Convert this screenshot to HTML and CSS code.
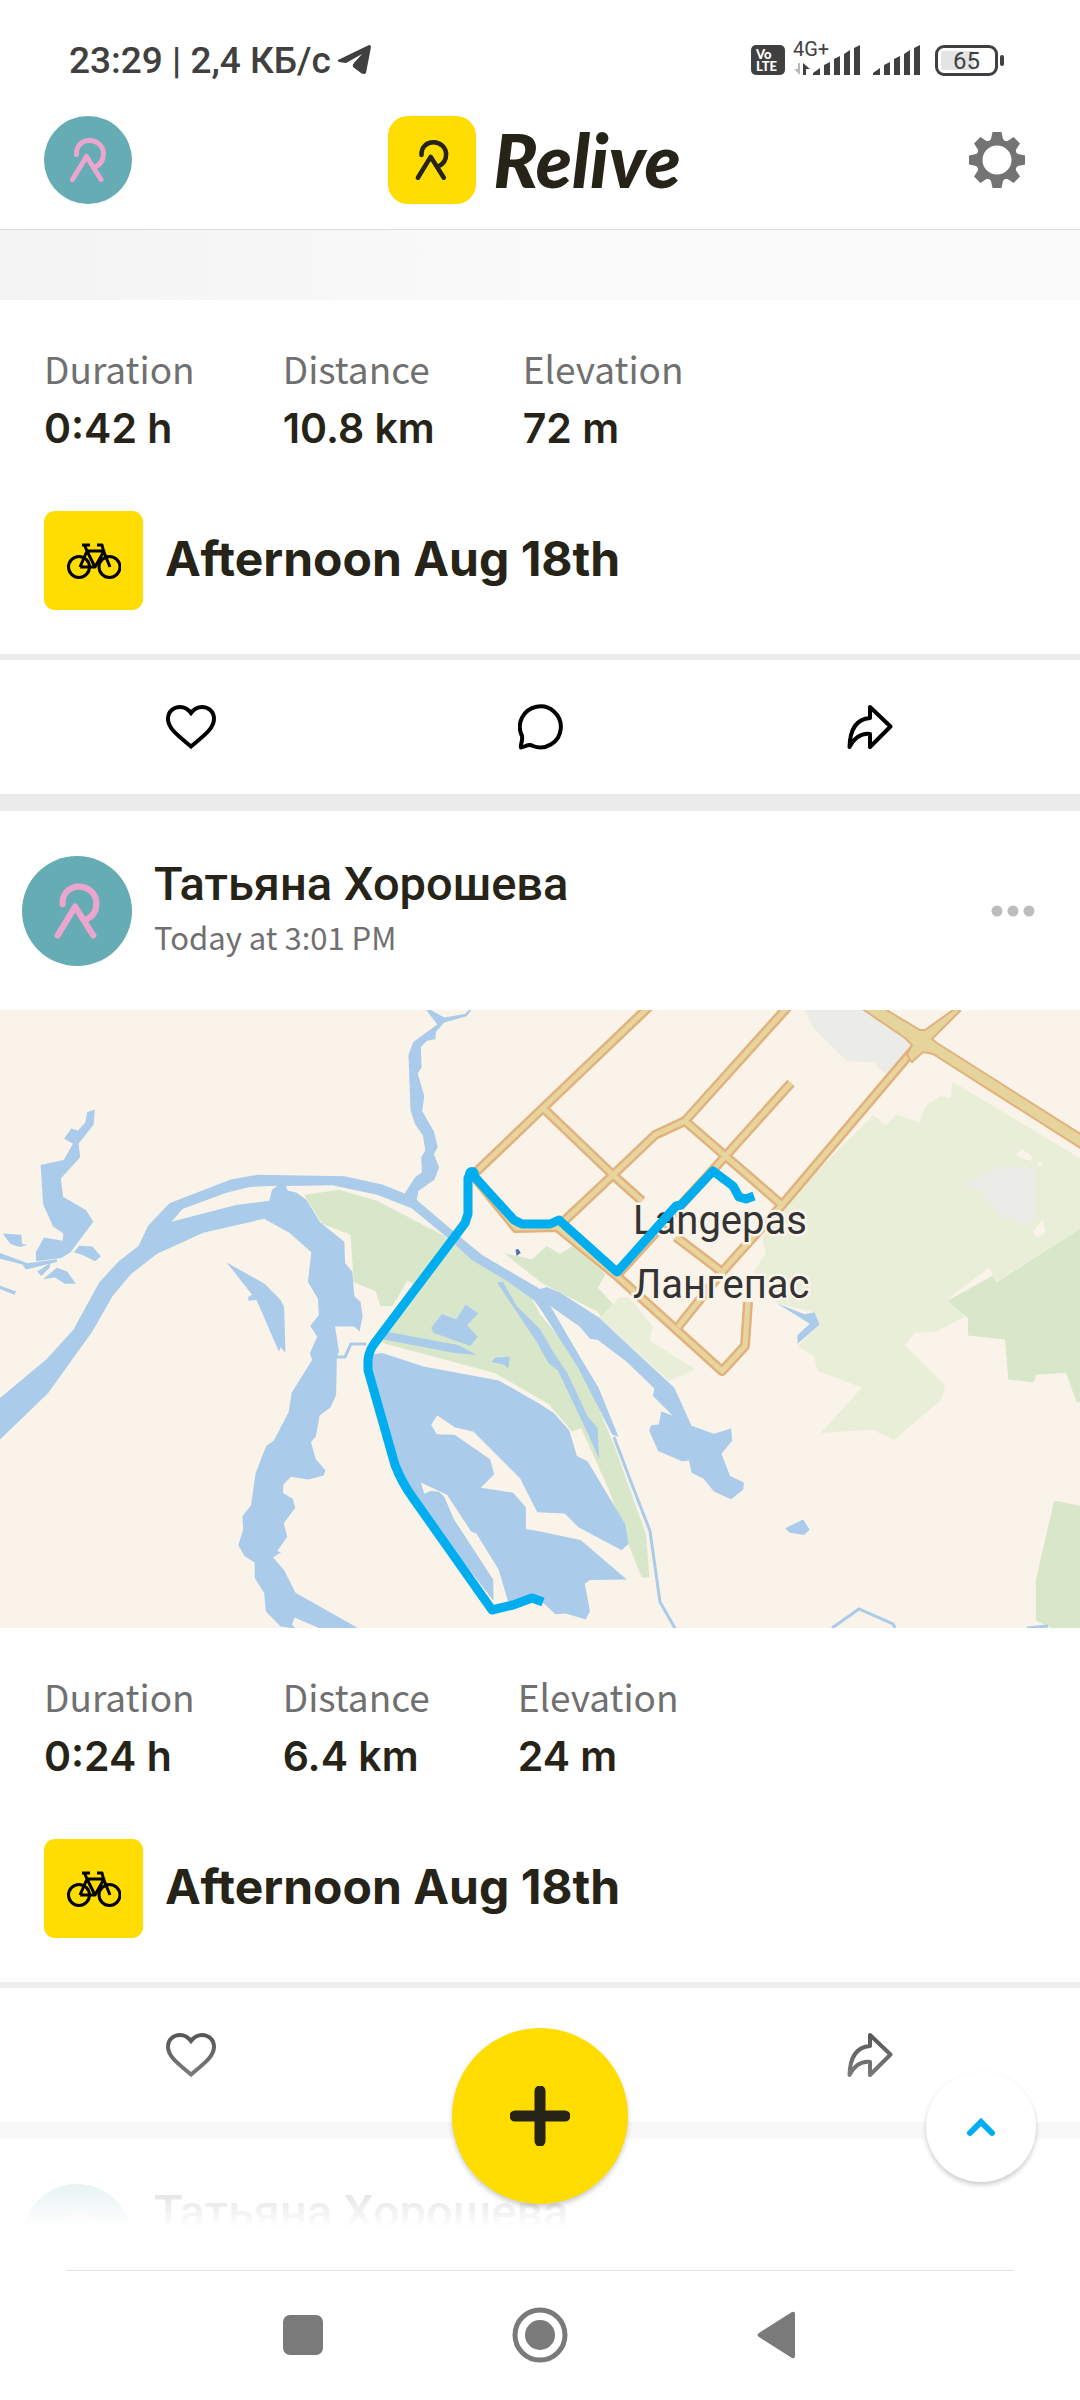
FILE: index.html
```
<!DOCTYPE html>
<html lang="en">
<head>
    <meta charset="utf-8">
    <meta name="viewport" content="width=device-width, initial-scale=1">
    <title>Relive</title>
    <link rel="stylesheet" href="styles.css">
</head>
<body>
<!-- shared icons -->
<svg class="defs" aria-hidden="true">
    <symbol id="mark" viewBox="0 0 88 88">
        <path d="M32.500 38.500C32 30 38 24.500 45.500 24.500C53 24.500 59.500 30 59.500 38C59.500 44 56.500 48.500 51 51M28.500 63.500L42.500 40.500L57 63.500" fill="none" stroke="currentColor" stroke-width="5" stroke-linecap="round" stroke-linejoin="round"/>
    </symbol>
    <symbol id="bike" viewBox="0 0 54 36">
        <g fill="none" stroke="#000" stroke-width="3" stroke-linejoin="round">
            <circle cx="12" cy="24" r="10.500"/>
            <circle cx="42.500" cy="24" r="10.500"/>
            <path d="M13 24H28L37 8H20L13 24M20 8L28 24M15 2H23M17.500 2L20 8M30 2H35L36.500 8L43 24"/>
        </g>
    </symbol>
    <symbol id="heart" viewBox="0 0 50 44">
        <path d="M25 41.500C14 32 2 24 2 14C2 6 8 2 14 2C19 2 22 4 25 8C28 4 31 2 36 2C42 2 48 6 48 14C48 24 36 32 25 41.500Z" fill="none" stroke="#000" stroke-width="4"/>
    </symbol>
    <symbol id="comment" viewBox="0 0 46 46">
        <path d="M4 32A20.500 20.500 0 1 1 15 42C10 39 8 43 3 43.500C2 41 5 37 4 32Z" fill="none" stroke="#000" stroke-width="4" stroke-linejoin="round"/>
    </symbol>
    <symbol id="share" viewBox="0 0 46 46">
        <path d="M2.500 43C3 25 9 15 23 14V3L43.500 22.500L23 43V30C15 29 8 33 2.500 43Z" fill="none" stroke="#000" stroke-width="4" stroke-linejoin="round"/>
    </symbol>
    <symbol id="bars" viewBox="0 0 48 30">
        <path d="M0 30V28L7 23V30ZM11 30V20L17 17V30ZM21 30V14L27 11V30ZM31 30V9L37 5V30ZM41 30V3L47 0V30Z" fill="#404040"/>
    </symbol>
</svg>

<div class="app">
    <div class="status">
        <span class="statusText">23:29 | 2,4 КБ/с</span>
        <svg class="telegram" width="34" height="30" viewBox="0 0 34 30"><path d="M1 15L32 0Q34 0 34 2L29 28Q27 30 24 28L16 22Q15 20 17 18L25 9L9 18L2 17Q0 16 1 15Z" fill="#404040"/></svg>
        <div class="statusIcons">
            <span class="volte"><span>Vo</span><span>LTE</span></span>
            <span class="network">
                <span class="networkType">4G+</span>
                <svg class="traffic" width="16" height="12" viewBox="0 0 16 12"><path d="M0 6H4V0H6V12Z" fill="#b8b8b8"/><path d="M9 12V0L16 6H12V12Z" fill="#404040"/></svg>
                <svg width="48" height="30"><use href="#bars"/></svg>
            </span>
            <svg width="48" height="30"><use href="#bars"/></svg>
            <span class="battery">65</span>
        </div>
    </div>

    <header class="header">
        <button class="avatar small" aria-label="Profile"><svg><use href="#mark"/></svg></button>
        <a class="logo" href="#">
            <span class="logoBox"><svg><use href="#mark"/></svg></span>
            <span class="logoText">Relive</span>
        </a>
        <button class="settings" aria-label="Settings">
            <svg width="56" height="56" viewBox="-28 -28 56 56" fill="#737373">
                <circle r="17.500" fill="none" stroke="#737373" stroke-width="6"/>
                <path id="tooth" d="M-4.500 -28H4.500L6 -21Q7 -19 10 -18L-10 -18Q-7 -19 -6 -21Z"/>
                <use href="#tooth" transform="rotate(45)"/>
                <use href="#tooth" transform="rotate(90)"/>
                <use href="#tooth" transform="rotate(135)"/>
                <use href="#tooth" transform="rotate(180)"/>
                <use href="#tooth" transform="rotate(225)"/>
                <use href="#tooth" transform="rotate(270)"/>
                <use href="#tooth" transform="rotate(315)"/>
            </svg>
        </button>
    </header>

    <main class="feed">
        <article class="post">
            <div class="loading"></div>
            <dl class="stats">
                <div><dt>Duration</dt><dd>0:42 h</dd></div>
                <div><dt>Distance</dt><dd>10.8 km</dd></div>
                <div><dt>Elevation</dt><dd>72 m</dd></div>
            </dl>
            <div class="title">
                <span class="sport"><svg width="54" height="36"><use href="#bike"/></svg></span>
                <h2>Afternoon Aug 18th</h2>
            </div>
            <div class="actions">
                <button aria-label="Like"><svg width="50" height="44"><use href="#heart"/></svg></button>
                <button aria-label="Comment"><svg width="46" height="46"><use href="#comment"/></svg></button>
                <button aria-label="Share"><svg width="46" height="46"><use href="#share"/></svg></button>
            </div>
        </article>

        <article class="post">
            <div class="author">
                <span class="avatar"><svg><use href="#mark"/></svg></span>
                <div class="authorText">
                    <a href="#" class="name">Татьяна Хорошева</a>
                    <span class="time">Today at 3:01 PM</span>
                </div>
                <button class="more" aria-label="More">
                    <svg width="44" height="12" viewBox="0 0 44 12" fill="#bdbdbd"><circle cx="6" cy="6" r="5.500"/><circle cx="22" cy="6" r="5.500"/><circle cx="38" cy="6" r="5.500"/></svg>
                </button>
            </div>
            <svg class="map" viewBox="0 0 1080 618">
                <rect width="1080" height="618" fill="#faf3e9"/>
                <g transform="translate(0 -10) scale(.34439 .40816)">
                    <!-- built up areas -->
                    <path class="grey" d="M2338 24H2513L2648 105L2638 140L2580 188L2538 153L2460 150L2358 65Z"/>
                    <!-- woods -->
                    <path class="meadow" d="M2766 200L3136 388V560L2893 690L2873 655L2768 722L2753 737L2803 776L2718 812L2656 815L2628 846L2745 945L2733 980L2596 1078L2533 1053L2383 1061L2503 950L2373 908L2365 875L2318 848L2380 795L2365 765L2258 743L2188 668L2223 620L2213 585L2271 505L2536 282L2571 307L2603 280L2668 300L2688 260L2728 235L2760 240Z"/>
                    <path class="meadow" d="M1780 745L1798 728L1828 730L1896 800L1886 835L2020 905L1943 933L1738 777Z"/>
                    <path class="wood" d="M3140 558L2893 692L2883 675L2751 737L2811 780V822L2918 832L2928 930L3001 937L3008 918L3095 913L3126 985L3140 987Z"/>
                    <path class="wood" d="M3061 1226L3140 1240V1540H3058L3008 1520V1420Z"/>
                    <path class="wood" d="M883 478L985 465L1095 492L1290 578L1400 650L1540 725L1568 770L1643 845L1718 960L1783 1090L1876 1310L1886 1415H1863L1826 1335L1768 1200L1688 1050L1661 1057L1593 990L1440 915L1110 840V825L1205 697L1183 688L1140 750H1105L1090 713L1027 692L1018 575L935 548Z"/>
                    <path class="wood" d="M1463 620L1545 635L1588 603L1626 622L1663 602L1758 672L1736 705L1780 745L1745 775L1733 762L1628 718L1568 690Z"/>
                    <path class="grey" d="M2798 453L2903 407L3008 412V530L2983 553L2933 530L2908 540L2853 470Z"/>
                    <path class="land" d="M2948 380L2968 365L3000 385L2993 395ZM2998 570L3028 538L3036 568L3013 583ZM3008 395L3028 400L3020 410Z"/>
                    <!-- rivers -->
                    <path class="water" d="M0 975L135 880L213 808L288 692L345 640L403 602L430 553L492 498L670 440L750 428L1000 432L1110 452L1175 474L1205 435L1225 422L1223 385L1235 368L1228 332L1205 303L1192 270L1186 135L1200 103L1270 60L1237 24H1250L1290 43L1350 34L1362 24H1370L1355 40L1290 55L1266 78L1264 96L1240 100L1222 115L1224 165L1213 180L1232 236L1226 272L1260 322L1271 360L1260 378L1275 410L1262 440L1215 468L1210 490L1345 587L1400 625L1568 708L1588 703L1628 718L1738 777L1958 950L2008 1043L2073 1063L2123 1050L2126 1080L2095 1112L2120 1166L2160 1182L2158 1200L2123 1223L2073 1204L2043 1173L2008 1158L2001 1128L1980 1130L1911 1105L1885 1055L1891 1042L1913 1040L1920 1008L1953 1018L1896 970L1900 952L1818 885L1736 833L1713 830L1683 800L1598 750L1688 880L1738 950L1796 1070L1778 1065L1678 900L1568 755L1550 735L1475 690L1370 637L1310 590L1195 510L1095 477L965 454L830 456L835 467L862 472L890 490L930 545L1000 592L1002 645L1023 665L1029 725L1047 740L1053 775L1044 812L1028 800H973L984 860L978 880L976 968L960 998L928 1018L917 1070L903 1083L917 1125L945 1152L940 1165L895 1175L845 1168L823 1187L822 1208L850 1222L857 1244L824 1282L834 1315L805 1350L816 1353L793 1366L825 1397L858 1452L1042 1540H930L855 1513L848 1530L858 1540L815 1535L772 1498L767 1453L740 1417L739 1378L710 1362L692 1336L706 1298L704 1265L729 1238L742 1160L773 1093L795 1080L838 1010L847 962L906 882L900 865L921 825L901 798L926 772L923 732L894 690L904 618L840 570L767 536L590 570L455 622L380 672L327 725L268 812L140 963L0 1077Z"/>
                    <path class="land" d="M498 543L530 512L655 473L725 458L805 455L790 465L782 492L685 502Z"/>
                    <path class="water" d="M275 268L272 305L228 352L233 385L177 437L183 482L250 515L271 543L205 618L178 632L105 640L104 618L128 582L182 590L184 572L154 555L125 500L118 404L185 392L212 352L186 340L207 315L226 320L248 300L253 275Z"/>
                    <path class="water" d="M8 572L62 575L64 598L80 600L58 605L30 598ZM214 618L230 602L268 604L293 628L276 640L240 625ZM125 684L165 656L195 665L220 695H188L160 680ZM0 620L80 645L165 635V642L75 660L65 648L0 634ZM0 700L47 714L42 722L0 708ZM108 665L145 645V655L120 676Z"/>
                    <path class="water" d="M658 643L768 695L815 735L825 752L829 865L815 850L810 862L745 735L722 737L720 728L732 722Z"/>
                    <!-- lakes -->
                    <path class="water" d="M1252 803L1283 769L1325 783L1352 746L1389 768L1356 797L1387 825L1366 848L1258 815ZM1120 812L1330 845L1385 870L1320 865L1115 832ZM1427 887L1438 876L1480 874L1476 902L1462 893ZM1443 692L1460 690L1500 750L1568 806L1608 865L1648 915L1706 1020L1735 1048L1740 1125L1706 1060L1620 908L1593 890L1560 840Z"/>
                    <path class="water" d="M1085 868L1110 865L1230 898L1448 932L1568 990L1608 1012L1653 1055L1675 1117L1706 1130L1816 1285L1825 1333L1805 1348L1680 1292L1640 1258L1560 1255L1510 1172L1375 1058L1320 1047L1270 1018L1252 1040L1268 1064L1320 1065L1423 1125L1435 1162L1396 1195L1490 1207L1527 1243V1296L1568 1302L1686 1323L1820 1420L1713 1421L1698 1430L1713 1497L1701 1518L1643 1503L1613 1505L1568 1470L1475 1473L1448 1395L1383 1307L1368 1302L1298 1212L1222 1182L1232 1210L1250 1203L1275 1205L1290 1217L1318 1272L1432 1420L1433 1472L1200 1220L1150 1130L1075 900Z"/>
                    <path class="water" d="M2256 743L2336 770L2365 765L2380 795L2316 842L2315 822L2351 793ZM2280 1294L2332 1273L2351 1298L2335 1311L2293 1305Z"/>
                    <path d="M1497 612L1505 610L1512 620L1500 627Z" fill="#4c72b5"/>
                </g>
                <path class="stream" d="M614 427L631 472L650 521L660 592L676 620M832 618L859 599L893 614L895 618M1027 618L1048 616M335 347H345L351 334H366"/>

                <g class="roads casing">
                    <path d="M656 -10L543 98L473 165L516 218L557 217L617 266L722 361L745 336L748 292"/>
                    <path d="M543 98L613 165L642 191M676 227L722 262M794 -10L685 111L655 125L613 165L562 213M685 111L782 195M791 73L713 160L617 265M920 32L782 195L722 262L678 317"/>
                </g>
                <g class="roads fill">
                    <path d="M656 -10L543 98L473 165L516 218L557 217L617 266L722 361L745 336L748 292"/>
                    <path d="M543 98L613 165L642 191M676 227L722 262M794 -10L685 111L655 125L613 165L562 213M685 111L782 195M791 73L713 160L617 265M920 32L782 195L722 262L678 317"/>
                </g>
                <path d="M861 -2H883L920 20L925 20L956 -2L960 1L932 29L937 33L1082 125V139L933 44L923 42L912 52L907 45L912 35L905 28Z" fill="#e5d49b" stroke="#e2b27e" stroke-width="2"/>

                <text class="place" x="633" y="224">Langepas</text>
                <text class="place" x="633" y="288">Лангепас</text>
                <path class="route" d="M754 186L746 189L739 187L733 176L713 161L681 195L676 196L617 262L559 210L550 214H522L514 210L472 164L468 168V204L465 213L374 334Q369 341 368 350V360L395 455Q402 473 413 488L492 600L513 595L532 588L543 592"/>
                <circle cx="472" cy="164" r="7" fill="#00aeef"/>
            </svg>
            <dl class="stats">
                <div><dt>Duration</dt><dd>0:24 h</dd></div>
                <div><dt>Distance</dt><dd>6.4 km</dd></div>
                <div><dt>Elevation</dt><dd>24 m</dd></div>
            </dl>
            <div class="title">
                <span class="sport"><svg width="54" height="36"><use href="#bike"/></svg></span>
                <h2>Afternoon Aug 18th</h2>
            </div>
            <div class="actions">
                <button aria-label="Like"><svg width="50" height="44"><use href="#heart"/></svg></button>
                <button aria-label="Comment"><svg width="46" height="46"><use href="#comment"/></svg></button>
                <button aria-label="Share"><svg width="46" height="46"><use href="#share"/></svg></button>
            </div>
        </article>

        <article class="post">
            <div class="author">
                <span class="avatar"><svg><use href="#mark"/></svg></span>
                <div class="authorText">
                    <a href="#" class="name">Татьяна Хорошева</a>
                </div>
            </div>
        </article>

        <div class="fade"></div>
        <button class="add" aria-label="Add activity">
            <svg width="60" height="60" viewBox="0 0 60 60"><path d="M30 5V55M5 30H55" stroke="#262318" stroke-width="11" stroke-linecap="round"/></svg>
        </button>
        <button class="toTop" aria-label="Back to top">
            <svg width="30" height="20" viewBox="0 0 30 20"><path d="M4 16L15 5L26 16" fill="none" stroke="#00aeef" stroke-width="6" stroke-linecap="round"/></svg>
        </button>
    </main>

    <nav class="navbar">
        <button aria-label="Recent apps"><svg width="56" height="56" viewBox="0 0 56 56"><rect x="8" y="8" width="40" height="40" rx="7" fill="#7a7a7a"/></svg></button>
        <button aria-label="Home"><svg width="56" height="56" viewBox="0 0 56 56"><circle cx="28" cy="28" r="25" fill="none" stroke="#7a7a7a" stroke-width="5"/><circle cx="28" cy="28" r="15" fill="#7a7a7a"/></svg></button>
        <button aria-label="Back"><svg width="56" height="56" viewBox="0 0 56 56"><path d="M10 26L43 5Q46 4 46 7V49Q46 52 43 51L10 30Q7 28 10 26Z" fill="#7a7a7a"/></svg></button>
    </nav>
</div>
</body>
</html>
```
FILE: styles.css
```
* {
    box-sizing: border-box;
}
body {
    margin: 0;
    background-color: white;
    color: #262318;
    font-family: "Noto Sans CJK SC", "Noto Sans", sans-serif;
}
button {
    padding: 0;
    border: none;
    background: none;
    color: inherit;
}
a {
    color: inherit;
    text-decoration: none;
}
svg {
    display: block;
}
.defs {
    position: absolute;
    width: 0;
    height: 0;
}
.app {
    display: flex;
    flex-direction: column;
    height: 100vh;
}

/* status bar */
.status {
    display: flex;
    align-items: center;
    flex: none;
    height: 104px;
    padding: 16px 82px 0 69px;
    color: #404040;
    font-family: Roboto, sans-serif;
}
.statusText {
    font-size: 37px;
    font-weight: 500;
}
.telegram {
    margin-left: 6px;
}
.statusIcons {
    display: flex;
    align-items: center;
    gap: 12px;
    margin-left: auto;
}
.volte {
    display: flex;
    flex-direction: column;
    align-items: flex-start;
    width: 34px;
    height: 30px;
    padding: 3px 5px;
    border-radius: 5px;
    background-color: #404040;
    color: white;
    font-family: Lato, sans-serif;
    font-size: 13px;
    font-weight: 900;
    line-height: 12px;
}
.network {
    position: relative;
    padding-left: 16px;
}
.networkType {
    position: absolute;
    left: -4px;
    top: -8px;
    font-size: 20px;
    line-height: 24px;
}
.traffic {
    position: absolute;
    left: -3px;
    bottom: 0;
}
.battery {
    position: relative;
    width: 63px;
    height: 31px;
    margin-left: 2px;
    border: 3px solid #404040;
    border-radius: 9px;
    background: linear-gradient(to right, #e4e4e4 65%, white 65%) content-box;
    padding: 3px;
    font-size: 24px;
    line-height: 20px;
    text-align: center;
}
.battery::after {
    content: "";
    position: absolute;
    right: -9px;
    top: 7px;
    width: 4px;
    height: 11px;
    border-radius: 2px;
    background-color: #404040;
}

/* app header */
.header {
    display: grid;
    grid-template-columns: 1fr auto 1fr;
    align-items: center;
    flex: none;
    padding: 12px 55px 25px 44px;
    border-bottom: 1px solid #dedede;
}
.avatar {
    flex: none;
    width: 110px;
    height: 110px;
    border-radius: 50%;
    background-color: #66acb4;
    color: #eba6cf;
}
.avatar.small {
    width: 88px;
    height: 88px;
}
.avatar svg, .logoBox svg {
    width: 100%;
    height: 100%;
}
.logo {
    display: flex;
    align-items: center;
    gap: 17px;
}
.logoBox {
    width: 88px;
    height: 88px;
    padding: 4px;
    border-radius: 20px;
    background-color: #ffdd00;
}
.logoText {
    font-family: Lato, sans-serif;
    font-size: 74px;
    font-style: italic;
    font-weight: 900;
    line-height: 80px;
}
.settings {
    justify-self: end;
}

/* feed */
.feed {
    position: relative;
    flex: 1;
    min-height: 0;
    overflow: hidden;
}
.post {
    border-bottom: 17px solid #ebebeb;
}
.loading {
    height: 70px;
    background: linear-gradient(to right, #f3f3f3, #fafafa 50%);
}
.stats {
    display: flex;
    gap: 88px;
    margin: 0;
    padding: 43px 44px 48px;
}
.stats dt {
    color: #707070;
    font-size: 37px;
    line-height: 50px;
}
.stats dd {
    margin: 0;
    font-family: Inter, sans-serif;
    font-size: 41px;
    font-weight: 600;
    line-height: 70px;
}
.title {
    display: flex;
    align-items: center;
    gap: 22px;
    padding: 0 44px 44px;
}
.title h2 {
    margin: 0;
    padding-bottom: 4px;
    font-family: Inter, sans-serif;
    font-size: 48px;
    font-weight: 700;
    line-height: 60px;
}
.sport {
    display: grid;
    place-items: center;
    width: 99px;
    height: 99px;
    border-radius: 11px;
    background-color: #ffdd00;
}
.actions {
    display: grid;
    grid-template-columns: 382fr 318fr 340fr;
    place-items: center;
    height: 140px;
    padding-right: 40px;
    border-top: 6px solid #ebebeb;
}
.author {
    display: flex;
    align-items: center;
    gap: 22px;
    padding: 45px 45px 44px 22px;
}
.authorText {
    display: flex;
    flex-direction: column;
    height: 110px;
}
.name {
    font-family: Roboto, sans-serif;
    font-size: 47px;
    font-weight: 500;
    line-height: 56px;
}
.time {
    color: #707070;
    font-size: 31px;
    line-height: 50px;
}
.more {
    margin-left: auto;
}

/* map */
.map {
    width: 100%;
    height: auto;
}
.land {
    fill: #faf3e9;
}
.water {
    fill: #abcbea;
}
.wood {
    fill: #d8e7c9;
}
.meadow {
    fill: #e9eed9;
}
.grey {
    fill: #ebece7;
}
.stream {
    fill: none;
    stroke: #abcbea;
    stroke-width: 3;
}
.roads {
    fill: none;
    stroke-linejoin: round;
}
.casing {
    stroke: #e2b27e;
    stroke-width: 10;
}
.fill {
    stroke: #e8d49d;
    stroke-width: 5;
}
.route {
    fill: none;
    stroke: #00aeef;
    stroke-width: 9;
    stroke-linejoin: round;
}
.place {
    fill: #333;
    stroke: #faf3e9;
    stroke-width: 5px;
    paint-order: stroke;
    font-family: Roboto, sans-serif;
    font-size: 40px;
}

/* floating buttons */
.fade {
    position: absolute;
    left: 0;
    right: 0;
    bottom: 0;
    height: 264px;
    background: linear-gradient(to bottom, rgba(255,255,255,0.1), white);
}
.add {
    position: absolute;
    left: calc(50% - 88px);
    bottom: 24px;
    display: grid;
    place-items: center;
    width: 176px;
    height: 176px;
    border-radius: 50%;
    background-color: #ffdd00;
    box-shadow: 0 3px 5px rgba(0,0,0,0.2);
}
.toTop {
    position: absolute;
    right: 44px;
    bottom: 46px;
    display: grid;
    place-items: center;
    width: 110px;
    height: 110px;
    border-radius: 50%;
    background-color: white;
    box-shadow: 0 3px 5px rgba(0,0,0,0.2);
}

/* system navigation */
.navbar {
    display: flex;
    justify-content: center;
    gap: 181px;
    flex: none;
    height: 172px;
    padding-top: 79px;
    background: linear-gradient(#e2e2e2, #e2e2e2) center 42px / calc(100% - 132px) 1px no-repeat;
}
.navbar button {
    height: 56px;
}
```
